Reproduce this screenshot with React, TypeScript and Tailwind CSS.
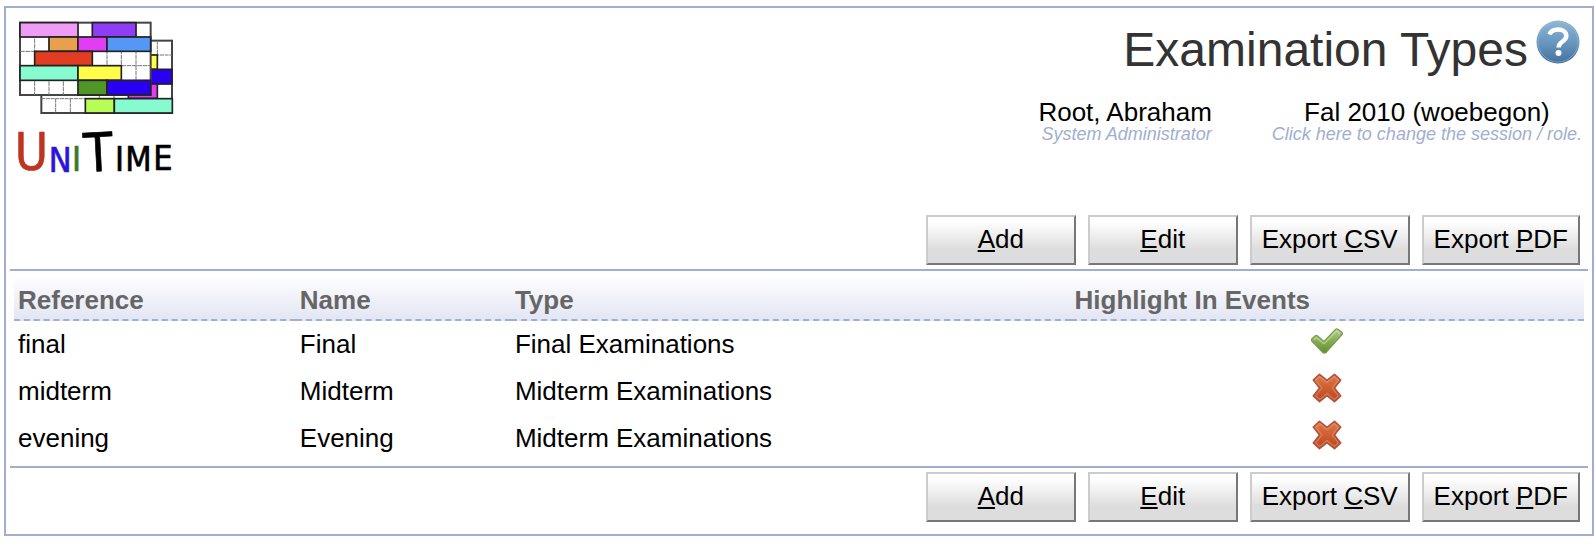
import React from "react";

type Block = { x: number; y: number; w: number; h: number; fill: string };

const frontBlocks: Block[] = [
  { x: 60, y: 68, w: 174, h: 43, fill: "#ee9cf6" },
  { x: 277, y: 68, w: 131, h: 43, fill: "#8f3df5" },
  { x: 147, y: 111, w: 87, h: 43, fill: "#e8a04c" },
  { x: 234, y: 111, w: 87, h: 43, fill: "#e23df5" },
  { x: 321, y: 111, w: 131, h: 43, fill: "#5597f7" },
  { x: 104, y: 154, w: 173, h: 43, fill: "#e23d22" },
  { x: 60, y: 197, w: 174, h: 44, fill: "#87fbd0" },
  { x: 234, y: 197, w: 130, h: 44, fill: "#fffd4a" },
  { x: 234, y: 241, w: 87, h: 44, fill: "#4f9626" },
  { x: 321, y: 241, w: 131, h: 44, fill: "#2a00f5" },
];

const backBlocks: Block[] = [
  { x: 430, y: 165, w: 42, h: 43, fill: "#fffd4a" },
  { x: 430, y: 208, w: 86, h: 44, fill: "#2a00f5" },
  { x: 385, y: 252, w: 87, h: 43, fill: "#e23df5" },
  { x: 256, y: 296, w: 87, h: 43, fill: "#b8fd55" },
  { x: 343, y: 296, w: 174, h: 43, fill: "#87fbd0" },
];

function Blocks({ items }: { items: Block[] }) {
  return (
    <g stroke="#222" strokeWidth="5">
      {items.map((b) => (
        <rect key={`${b.x}-${b.y}`} x={b.x} y={b.y} width={b.w} height={b.h} fill={b.fill} />
      ))}
    </g>
  );
}

function Logo() {
  return (
    <svg
      viewBox="42 60 486 495"
      className="h-[165px] w-[162px] shrink-0"
      role="img"
      aria-label="UniTime"
    >
      <rect x="124" y="122" width="392" height="217" fill="#fff" stroke="#444" strokeWidth="6" />
      <path
        d="M167 296V339M211 296V339M472 122V296M452 165H516M452 252H516M124 296H516M298 285V296M342 285V296"
        stroke="#777"
        strokeWidth="3"
        strokeDasharray="12 2"
        fill="none"
      />
      <Blocks items={backBlocks} />
      <rect x="60" y="68" width="392" height="217" fill="#fff" stroke="#444" strokeWidth="6" />
      <path
        d="M104 68V285M147 68V285M190 68V285M234 68V285M277 68V285M321 68V285M364 68V285M408 68V285M60 111H452M60 154H452M60 197H452M60 241H452"
        stroke="#777"
        strokeWidth="3"
        strokeDasharray="14 2"
        fill="none"
      />
      <Blocks items={frontBlocks} />
      <g
        className="font-['DejaVu_Sans_Condensed','DejaVu_Sans',sans-serif]"
        strokeLinejoin="round"
        strokeWidth="2"
      >
        <text x="44" y="511" fontSize="152" fill="#bf3420" stroke="#bf3420">U</text>
        <text x="146" y="516" fontSize="102" fill="#2a14d8" stroke="#2a14d8">N</text>
        <text x="216" y="512" fontSize="102" fill="#3c7a22" stroke="#3c7a22">I</text>
        <text x="250" y="514" fontSize="160" fill="#000" stroke="#000" transform="rotate(-3 295 455)">T</text>
        <text x="345" y="514" fontSize="102" fill="#000" stroke="#000">I</text>
        <text x="376" y="514" fontSize="102" fill="#000" stroke="#000">M</text>
        <text x="460" y="510" fontSize="102" fill="#000" stroke="#000">E</text>
      </g>
    </svg>
  );
}

function HelpIcon() {
  return (
    <svg viewBox="0 0 44 44" className="size-11" aria-hidden="true">
      <defs>
        <linearGradient id="help" x1="0" y1="0" x2="0" y2="1">
          <stop offset="0" stopColor="#8fb6d3" />
          <stop offset="0.5" stopColor="#6a97bf" />
          <stop offset="1" stopColor="#44709f" />
        </linearGradient>
      </defs>
      <circle cx="22" cy="22" r="21.5" fill="url(#help)" />
      <circle cx="22" cy="22" r="20" fill="none" stroke="#9dbdd6" strokeOpacity="0.5" />
      <path
        d="M13.5 14.5C15 10.500 18.500 9.500 22 9.500c4.800 0 8.300 2.600 8.300 6.500 0 5.800-7.800 5.200-7.800 11.500"
        fill="none"
        stroke="#fff"
        strokeWidth="4.500"
      />
      <circle cx="22.500" cy="33" r="3" fill="#fff" />
    </svg>
  );
}

function CheckIcon() {
  return (
    <svg viewBox="0 0 32 32" className="size-8" role="img" aria-label="Yes">
      <defs>
        <linearGradient id="yes" x1="0" y1="0" x2="0" y2="1">
          <stop offset="0" stopColor="#b5cf8c" />
          <stop offset="0.500" stopColor="#88ad55" />
          <stop offset="1" stopColor="#5f8f2c" />
        </linearGradient>
      </defs>
      <path
        d="M.7 14 4.300 10.800Q5.300 10 6.300 10.800L13 16.500 24.500 4.500q1.200-1.200 2.500-.2l4 3.200q1 .9 0 2L15 27.500q-1.600 1.300-3.200 0L.7 16q-.9-1 0-2Z"
        fill="url(#yes)"
        stroke="#7a9c50"
        strokeWidth="1.200"
      />
      <path d="M2.800 14.800 5.400 12.500 13 18.800 25.700 5.900 29 8.400" fill="none" stroke="#d3e3b8" strokeOpacity="0.700" strokeWidth="1.200" />
    </svg>
  );
}

function CrossIcon() {
  return (
    <svg viewBox="0 0 32 32" className="size-8" role="img" aria-label="No">
      <defs>
        <linearGradient id="no" x1="0" y1="0" x2="0" y2="1">
          <stop offset="0" stopColor="#dd7a50" />
          <stop offset="0.500" stopColor="#cf5f30" />
          <stop offset="1" stopColor="#b5441f" />
        </linearGradient>
      </defs>
      <path
        d="M8.500 2.300 16 8.300 23.500 2.300 29.700 8 23.400 16 29.700 24 23.500 29.700 16 23.700 8.500 29.700 2.300 24 8.600 16 2.300 8Z"
        fill="url(#no)"
        stroke="#b0523a"
        strokeWidth="1.600"
        strokeLinejoin="round"
      />
      <path
        d="M4.600 8.200 8.600 4.500 16 10.500 23.400 4.500 27.400 8.200 21.200 16 27.400 23.800 23.400 27.500 16 21.500 8.600 27.500 4.600 23.800 10.800 16Z"
        fill="none"
        stroke="#eba587"
        strokeOpacity="0.500"
        strokeWidth="1.200"
        strokeLinejoin="round"
      />
    </svg>
  );
}

const actions = [
  { before: "", hotkey: "A", after: "dd" },
  { before: "", hotkey: "E", after: "dit" },
  { before: "Export ", hotkey: "C", after: "SV" },
  { before: "Export ", hotkey: "P", after: "DF" },
];

function ActionBar() {
  return (
    <div className="flex flex-wrap justify-end gap-3 pr-2">
      {actions.map((a) => (
        <button
          key={a.hotkey}
          type="button"
          className="h-[50px] min-w-[150px] border-2 border-t-[#cccccc] border-r-[#777777] border-b-[#777777] border-l-[#cccccc] bg-linear-to-b from-white from-10% to-[#dddddd] to-70% px-2.5 pb-0.5 leading-[30px] whitespace-pre"
        >
          {a.before}
          <span className="underline">{a.hotkey}</span>
          {a.after}
        </button>
      ))}
    </div>
  );
}

const columns = [
  { label: "Reference", width: "w-[17.95%]" },
  { label: "Name", width: "w-[13.7%]" },
  { label: "Type", width: "w-[35.65%]" },
  { label: "Highlight In Events", width: "" },
];

const rows = [
  { reference: "final", name: "Final", type: "Final Examinations", highlight: true },
  { reference: "midterm", name: "Midterm", type: "Midterm Examinations", highlight: false },
  { reference: "evening", name: "Evening", type: "Midterm Examinations", highlight: false },
];

export default function App() {
  return (
    <div className="bg-white pt-1.5 pr-0.5 pb-2 pl-1 font-['Liberation_Sans',Arial,sans-serif] text-[26px] text-black">
      <div className="border-2 border-[#a1aed0] px-1 pb-3">
        <header className="flex items-start justify-between pt-3 pr-1 pb-[30px] pl-1">
          <Logo />
          <div className="flex flex-col items-end">
            <div className="flex items-start gap-2 pr-1">
              <h1 className="pt-0.5 text-5xl leading-[56px] text-[#333333]">Examination Types</h1>
              <a href="#help" aria-label="Help">
                <HelpIcon />
              </a>
            </div>
            <div className="mt-[21px] flex gap-[60px] pr-0.5 leading-[26px]">
              <div className="text-right">
                <div>Root, Abraham</div>
                <div className="text-lg leading-[18px] text-[#a1aed0] italic">System Administrator</div>
              </div>
              <a href="#session" className="block text-center">
                <span className="block">Fal 2010 (woebegon)</span>
                <span className="block text-lg leading-[18px] text-[#a1aed0] italic">
                  Click here to change the session / role.
                </span>
              </a>
            </div>
          </div>
        </header>

        <main>
          <ActionBar />
          <div className="my-1 border-y-2 border-[#a1aed0] p-1">
            <table className="w-full table-fixed border-separate border-spacing-0 text-left leading-[30px]">
              <thead>
                <tr className="bg-linear-to-b from-white to-[#e2e5f3]">
                  {columns.map((c) => (
                    <th
                      key={c.label}
                      scope="col"
                      className={`${c.width} border-b-2 border-dashed border-[#a1aed0] px-1 pt-2.5 pb-1 font-bold text-[#666666]`}
                    >
                      {c.label}
                    </th>
                  ))}
                </tr>
              </thead>
              <tbody>
                {rows.map((r) => (
                  <tr key={r.reference} className="h-[47px]">
                    <td className="px-1 pb-0.5">{r.reference}</td>
                    <td className="px-1 pb-0.5">{r.name}</td>
                    <td className="px-1 pb-0.5">{r.type}</td>
                    <td className="px-1 pt-1 align-top">
                      <div className="flex justify-center">{r.highlight ? <CheckIcon /> : <CrossIcon />}</div>
                    </td>
                  </tr>
                ))}
              </tbody>
            </table>
          </div>
          <ActionBar />
        </main>
      </div>
    </div>
  );
}
